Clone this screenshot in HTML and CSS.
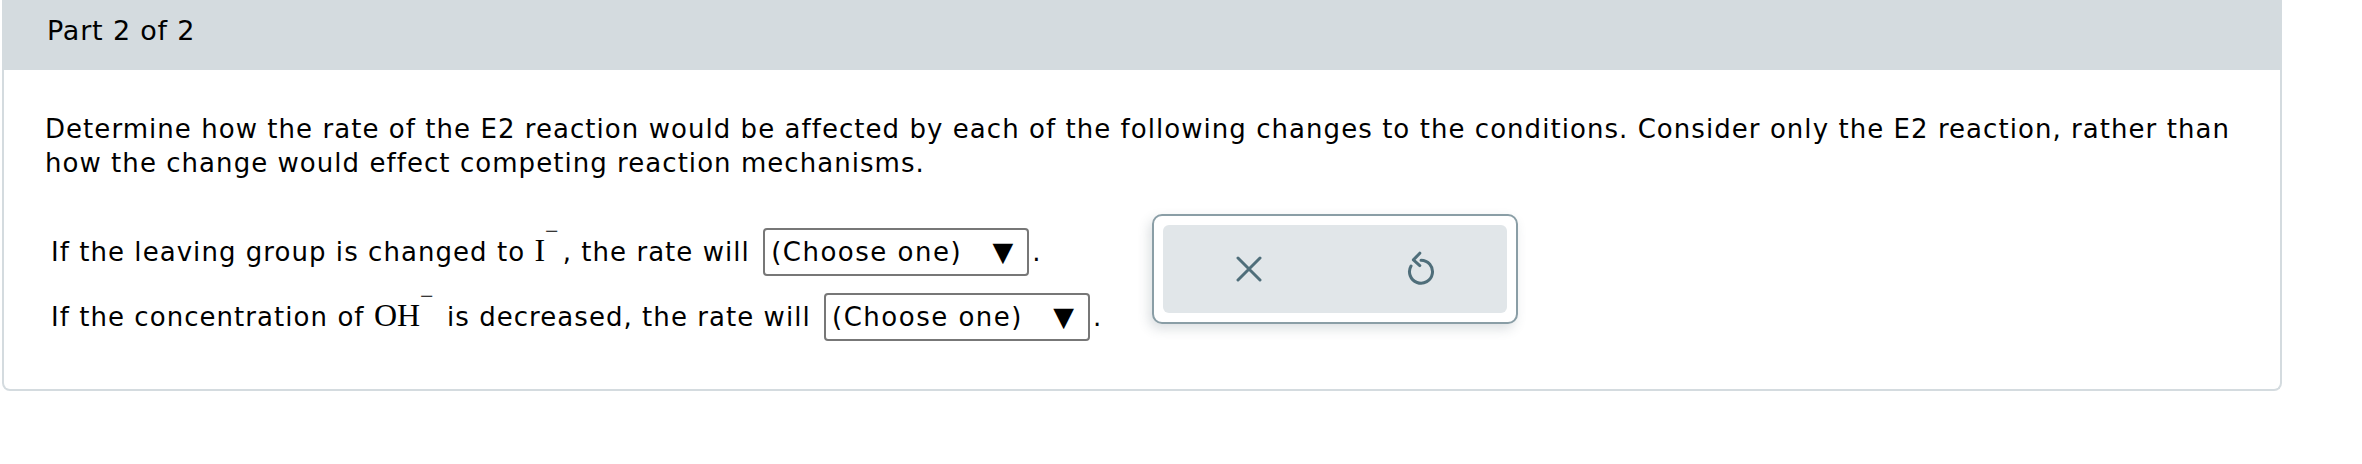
FILE: index.html
```html
<!DOCTYPE html>
<html lang="en">
<head>
<meta charset="utf-8">
<title>Part 2 of 2</title>
<link rel="stylesheet" href="styles.css">
</head>
<body>
<div class="panel">
  <div class="header">Part 2 of 2</div>
  <div class="content">
    <p class="intro">Determine how the rate of the E2 reaction would be affected by each of the following changes to the conditions. Consider only the E2 reaction, rather than how the change would effect competing reaction mechanisms.</p>
    <div class="answer">
      <div class="questions">
        <div class="row row-first">If the leaving group is changed to <span class="math">I<sup class="charge">−</sup></span>, the rate will <span class="select"><span class="select-text">(Choose one)</span><span class="select-arrow">▼</span></span>.</div>
        <div class="row row-second">If the concentration of <span class="math">OH<sup class="charge">−</sup></span> is decreased, the rate will <span class="select"><span class="select-text">(Choose one)</span><span class="select-arrow">▼</span></span>.</div>
      </div>
      <div class="toolbox">
        <div class="tools">
          <span class="tool">
            <svg class="icon-x" width="26" height="26" viewBox="0 0 26 26"><path d="M2 2 L24 24 M24 2 L2 24" fill="none" stroke="#4f6e7a" stroke-width="3" stroke-linecap="round"/></svg>
          </span>
          <span class="tool">
            <svg class="icon-undo" width="28" height="36" viewBox="0 0 28 36"><path d="M14 10.2 A11.5 11.5 0 1 1 4.04 15.95" fill="none" stroke="#4f6e7a" stroke-width="3" stroke-linecap="round"/><path d="M12.8 3.2 L6.4 9.9 L12.8 15.6" fill="none" stroke="#4f6e7a" stroke-width="3" stroke-linecap="round" stroke-linejoin="round"/></svg>
          </span>
        </div>
      </div>
    </div>
  </div>
</div>
</body>
</html>
```

FILE: styles.css
```css
* { box-sizing: border-box; }
html, body { margin: 0; padding: 0; background: #ffffff; }
body {
  font-family: "DejaVu Sans", Verdana, sans-serif;
  color: #000000;
  width: 2362px;
  height: 464px;
  overflow: hidden;
}
.panel {
  margin-left: 2px;
  width: 2280px;
  height: 391px;
  border: 2px solid #d4dbdf;
  border-top: none;
  border-radius: 0 0 8px 8px;
}
.header {
  height: 70px;
  margin: 0 -2px;
  background: #d4dbdf;
  padding: 15px 0 0 45px;
  font-size: 27px;
  line-height: 32px;
  letter-spacing: 0.8px;
}
.content {
  padding-left: 41px;
}
.intro {
  margin: 42px 0 0 0;
  width: 2200px;
  font-size: 26px;
  line-height: 34px;
  letter-spacing: 1.05px;
}
.answer {
  display: flex;
  align-items: flex-start;
  margin-top: 34px;
}
.questions {
  padding-top: 14px;
  padding-left: 6px;
  font-size: 26px;
  line-height: 34px;
  letter-spacing: 1.05px;
}
.row-second { margin-top: 17px; }
.math {
  font-family: "Liberation Serif", "Times New Roman", serif;
  font-size: 32px;
  line-height: 34px;
  letter-spacing: 0;
}
.charge {
  font-size: 24px;
  line-height: 0;
  vertical-align: 22px;
  margin-left: 0;
  margin-right: 4px;
}
.select {
  display: inline-flex;
  align-items: center;
  width: 266px;
  height: 48px;
  margin-left: 4px;
  margin-right: 3px;
  padding: 0 14px 0 6px;
  border: 2px solid #777777;
  border-radius: 4px;
  vertical-align: baseline;
  line-height: 30px;
  letter-spacing: 1.5px;
}
.select-arrow {
  margin-left: auto;
  font-size: 27px;
  letter-spacing: 0;
}
.toolbox {
  margin-left: 50px;
  width: 366px;
  height: 110px;
  padding: 9px;
  border: 2px solid #8a9ea6;
  border-radius: 10px;
  background: #ffffff;
  box-shadow: -3px 5px 12px rgba(60, 85, 95, 0.18);
}
.tools {
  display: flex;
  height: 100%;
  background: #e1e6e9;
  border-radius: 6px;
}
.tool {
  flex: 1;
  display: flex;
  align-items: center;
  justify-content: center;
}
.icon-undo { margin-top: -2px; }
```
